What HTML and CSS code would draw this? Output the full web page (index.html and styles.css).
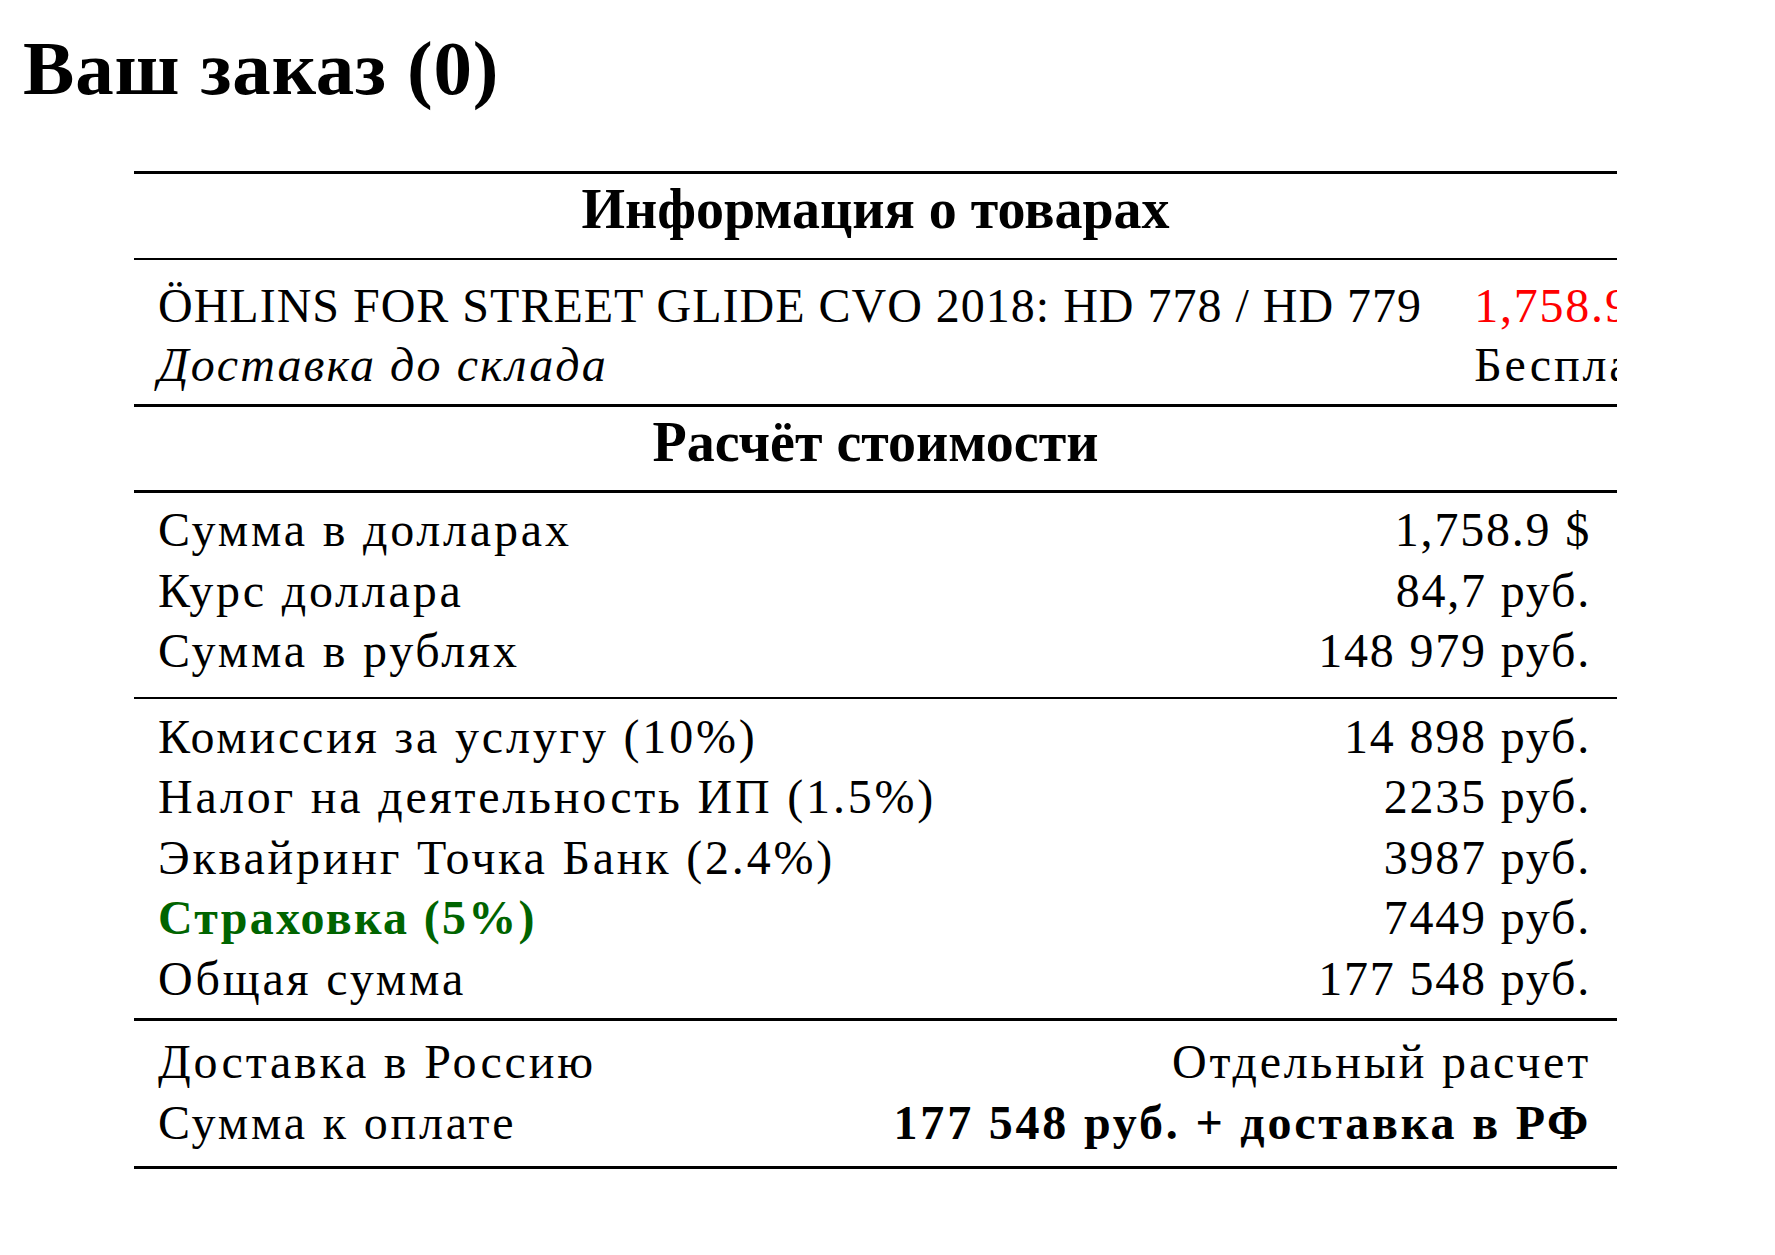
FILE: index.html
```html
<!DOCTYPE html>
<html lang="ru">
<head>
<meta charset="utf-8">
<title>Ваш заказ</title>
<link rel="stylesheet" href="styles.css">
</head>
<body>
<div class="page">
  <h1 class="title">Ваш заказ (0)</h1>
  <div class="order">
    <div class="section-head head-first">Информация о товарах</div>
    <div class="item">
      <div class="item-info">
        <div class="item-name">ÖHLINS FOR STREET GLIDE CVO 2018: HD 778 / HD 779</div>
        <div class="item-delivery">Доставка до склада</div>
      </div>
      <div class="item-price">
        <div class="price-red num">1,758.9 $</div>
        <div class="label">Бесплатно</div>
      </div>
    </div>
    <div class="section-head head-calc">Расчёт стоимости</div>
    <div class="group group-a">
      <div class="row"><span class="label">Сумма в долларах</span><span class="num">1,758.9 $</span></div>
      <div class="row"><span class="label">Курс доллара</span><span class="num">84,7 руб.</span></div>
      <div class="row"><span class="label">Сумма в рублях</span><span class="num">148 979 руб.</span></div>
    </div>
    <div class="group group-b">
      <div class="row"><span class="label">Комиссия за услугу (10%)</span><span class="num">14 898 руб.</span></div>
      <div class="row"><span class="label">Налог на деятельность ИП (1.5%)</span><span class="num">2235 руб.</span></div>
      <div class="row"><span class="label">Эквайринг Точка Банк (2.4%)</span><span class="num">3987 руб.</span></div>
      <div class="row"><span class="label insurance">Страховка (5%)</span><span class="num">7449 руб.</span></div>
      <div class="row"><span class="label">Общая сумма</span><span class="num">177 548 руб.</span></div>
    </div>
    <div class="group group-c">
      <div class="row"><span class="label">Доставка в Россию</span><span class="label">Отдельный расчет</span></div>
      <div class="row"><span class="label">Сумма к оплате</span><span class="label strong">177 548 руб. + доставка в РФ</span></div>
    </div>
  </div>
</div>
</body>
</html>
```

FILE: styles.css
```css
html, body {
  margin: 0;
  padding: 0;
  background: #ffffff;
}

body {
  font-family: "Liberation Serif", "Times New Roman", serif;
  color: #000000;
  font-size: 48px;
}

.page {
  padding-left: 23px;
  padding-top: 19px;
}

.title {
  margin: 0;
  font-size: 77px;
  font-weight: 700;
  line-height: 98px;
  letter-spacing: 0.85px;
}

.order {
  margin-top: 54px;
  margin-left: 111px;
  width: 1483px;
  overflow: hidden;
  border-bottom: 3px solid #000;
}

.section-head {
  font-size: 56px;
  font-weight: 700;
  text-align: center;
  line-height: 71px;
  padding-bottom: 13px;
}

.head-first {
  border-top: 3px solid #000;
  border-bottom: 2px solid #000;
}

.head-calc {
  border-top: 3px solid #000;
  border-bottom: 3px solid #000;
  padding-bottom: 12px;
}

.item {
  display: flex;
  gap: 52px;
  padding: 16px 24px 10px 24px;
  line-height: 59px;
  white-space: nowrap;
}

.item-info,
.item-price {
  flex-shrink: 0;
}

.item-name {
  letter-spacing: 1px;
}

.item-delivery {
  font-style: italic;
  letter-spacing: 2.1px;
}

.price-red {
  color: #ff0000;
}

.group {
  padding: 7px 28px 15px 24px;
}

.group-b {
  border-top: 2px solid #000;
  border-bottom: 3px solid #000;
  padding-top: 8px;
  padding-bottom: 9px;
}

.group-c {
  padding-top: 11px;
  padding-bottom: 13px;
}

.row {
  display: flex;
  justify-content: space-between;
  line-height: 60.5px;
  white-space: nowrap;
}

.label {
  letter-spacing: 2.8px;
}

.num {
  letter-spacing: 1.8px;
}

.row .label:last-child,
.row .num:last-child {
  margin-right: -2px;
}

.insurance {
  color: #006400;
  font-weight: 700;
  letter-spacing: 2.3px;
}

.strong {
  font-weight: 700;
}
```
